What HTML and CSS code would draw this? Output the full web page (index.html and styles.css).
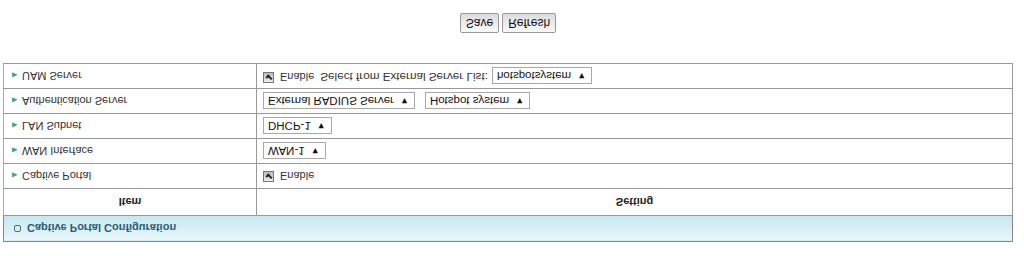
FILE: index.html
```html
<!DOCTYPE html>
<html>
<head>
    <meta name="viewport" content="width=device-width, initial-scale=1.0">
    <link rel="stylesheet" href="styles.css">
</head>
<body>
    <div class="page">
        <table class="config">
            <tr>
                <th colspan="2" class="title"><span class="title-icon"></span>Captive Portal Configuration</th>
            </tr>
            <tr class="head">
                <td class="item">Item</td>
                <td>Setting</td>
            </tr>
            <tr>
                <td class="item"><span class="bullet">&#9656;</span>Captive Portal</td>
                <td><span class="check"></span>Enable</td>
            </tr>
            <tr>
                <td class="item"><span class="bullet">&#9656;</span>WAN Interface</td>
                <td><span class="select">WAN-1<span class="arrow">&#9660;</span></span></td>
            </tr>
            <tr>
                <td class="item"><span class="bullet">&#9656;</span>LAN Subnet</td>
                <td><span class="select">DHCP-1<span class="arrow">&#9660;</span></span></td>
            </tr>
            <tr>
                <td class="item"><span class="bullet">&#9656;</span>Authentication Server</td>
                <td>
                    <span class="select">External RADIUS Server<span class="arrow">&#9660;</span></span>
                    <span class="select second">Hotspot system<span class="arrow">&#9660;</span></span>
                </td>
            </tr>
            <tr>
                <td class="item"><span class="bullet">&#9656;</span>UAM Server</td>
                <td>
                    <span class="check"></span>Enable
                    <span class="label">Select from External Server List:</span>
                    <span class="select">hotspotsystem<span class="arrow">&#9660;</span></span>
                </td>
            </tr>
        </table>

        <div class="buttons">
            <button>Save</button>
            <button>Refresh</button>
        </div>
    </div>
</body>
</html>
```

FILE: styles.css
```css
html, body {
    margin: 0;
    padding: 0;
    background: #fff;
}

body {
    font-family: "Liberation Sans", Arial, sans-serif;
    font-size: 11px;
    color: #333;
}

/* the screen is shown mirrored top to bottom */
.page {
    height: 256px;
    padding: 14px 11px 0 3px;
    box-sizing: border-box;
    transform: scaleY(-1);
}

.config {
    width: 100%;
    border-collapse: collapse;
    border: 1px solid #888;
}

.config td {
    height: 24px;
    padding: 0 6px;
    border: 1px solid #999;
    border-left: 1px solid #aaa;
    white-space: nowrap;
}

.config td.item {
    width: 240px;
}

.title {
    height: 25px;
    padding: 0 0 0 10px;
    text-align: left;
    font-size: 11px;
    font-weight: bold;
    color: #2b5d78;
    background: linear-gradient(#eaf7fb, #c5e7f0);
    border-bottom: 1px solid #999;
}

.title-icon {
    display: inline-block;
    width: 5px;
    height: 5px;
    margin-right: 6px;
    border: 1px solid #4a6f82;
    border-radius: 2px;
    vertical-align: 1px;
}

.head td {
    height: 26px;
    text-align: center;
    font-weight: bold;
    color: #222;
}

.bullet {
    color: #3aa87c;
    font-size: 11px;
    margin: 0 4px 0 2px;
}

.check {
    display: inline-block;
    width: 9px;
    height: 9px;
    margin-right: 6px;
    border: 1px solid #777;
    background: linear-gradient(#eee, #bbb);
    vertical-align: -1px;
    position: relative;
}

.check::after {
    content: "";
    position: absolute;
    left: 2px;
    top: 2px;
    width: 4px;
    height: 2px;
    border-left: 2px solid #222;
    border-bottom: 2px solid #222;
    transform: rotate(-45deg);
}

.select {
    display: inline-block;
    height: 15px;
    line-height: 15px;
    padding: 0 5px 0 4px;
    border: 1px solid #a9a9a9;
    background: #fff;
    color: #111;
    font-size: 11.5px;
    vertical-align: middle;
}

.select.second {
    margin-left: 7px;
}

.arrow {
    font-size: 9px;
    margin-left: 6px;
    vertical-align: 1px;
}

.label {
    margin: 0 1px 0 3px;
    font-size: 11.7px;
}

.buttons {
    display: flex;
    justify-content: center;
    gap: 3px;
    margin-top: 30px;
}

.buttons button {
    height: 20px;
    padding: 0 5px;
    font-family: "Liberation Sans", Arial, sans-serif;
    font-size: 12px;
    color: #111;
    background: linear-gradient(#fafafa, #dcdcdc);
    border: 1px solid #999;
    border-radius: 2px;
}
```
